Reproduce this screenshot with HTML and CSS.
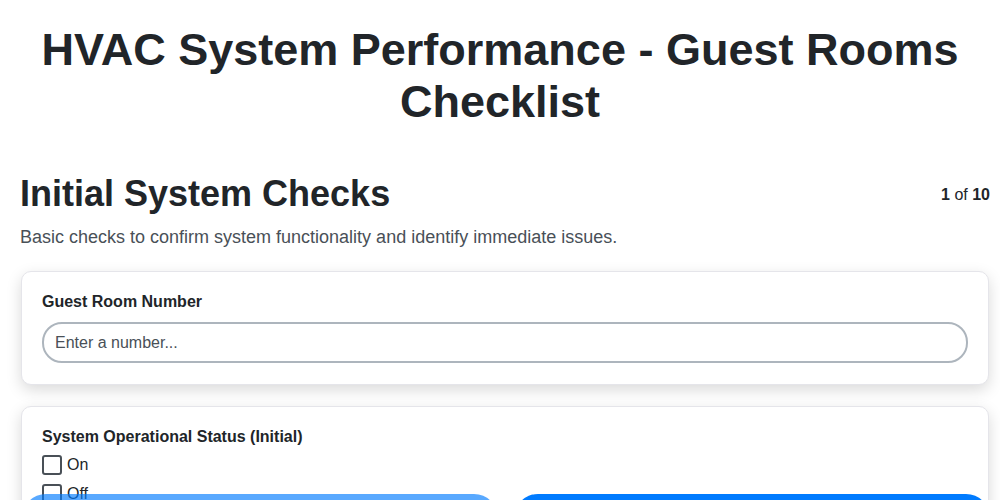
FILE: index.html
```html
<!DOCTYPE html>
<html lang="en">
<head>
  <meta charset="UTF-8" />
  <meta name="viewport" content="width=device-width, initial-scale=1.0"/>
  <title>HVAC System Performance - Guest Rooms Checklist</title>
  <link rel="stylesheet" href="styles.css">
</head>
<body>
  <div class="container">
    <h1>HVAC System Performance - Guest Rooms Checklist</h1>

    <div class="section-head">
      <h2>Initial System Checks</h2>
      <div class="step-count"><b>1</b> of <b>10</b></div>
    </div>
    <p class="section-desc">Basic checks to confirm system functionality and identify immediate issues.</p>

    <div class="card">
      <label class="field-label" for="room">Guest Room Number</label>
      <input type="text" id="room" class="text-input" placeholder="Enter a number..." />
    </div>

    <div class="card">
      <div class="field-label">System Operational Status (Initial)</div>
      <label class="check-row"><input type="checkbox" /> <span>On</span></label>
      <label class="check-row"><input type="checkbox" /> <span>Off</span></label>
      <label class="check-row"><input type="checkbox" /> <span>Error</span></label>
    </div>
  </div>

  <div class="nav-bar">
    <button class="nav-btn prev" disabled>Previous</button>
    <button class="nav-btn next">Next</button>
  </div>
</body>
</html>
```

FILE: styles.css
```css
* { box-sizing: border-box; }

body {
  margin: 0;
  font-family: "Liberation Sans", Arial, sans-serif;
  color: #212529;
  background: #fff;
}

.container {
  padding: 24px 10px 80px 20px;
}

h1 {
  margin: 0 0 44px;
  font-size: 45px;
  line-height: 52px;
  text-align: center;
  padding: 0 20px 0 10px;
}

.section-head {
  display: flex;
  justify-content: space-between;
  align-items: center;
}

h2 {
  margin: 0;
  font-size: 36px;
  line-height: 43px;
}

.step-count {
  font-size: 16px;
  padding-top: 2px;
}

.section-desc {
  margin: 9px 0 20px;
  font-size: 18px;
  line-height: 27px;
  color: #495057;
}

.card {
  margin: 0 1px 21px;
  padding: 18px 20px 21px;
  border: 1px solid #e5e5ea;
  border-radius: 10px;
  background: #fff;
  box-shadow: 0 5px 15px rgba(0,0,0,0.15);
}

.field-label {
  display: block;
  font-size: 16px;
  font-weight: bold;
  line-height: 24px;
  margin-bottom: 8px;
}

.text-input {
  display: block;
  width: 100%;
  height: 41px;
  padding: 0 11px;
  font-family: inherit;
  font-size: 16px;
  color: #212529;
  border: 2px solid #adb5bd;
  border-radius: 20px;
  outline: none;
}

.text-input::placeholder {
  color: #495057;
}

.check-row {
  display: flex;
  align-items: center;
  gap: 5px;
  height: 29px;
  font-size: 16px;
  margin-top: -7px;
  margin-bottom: 7px;
}

.check-row input {
  appearance: none;
  margin: 0;
  width: 20px;
  height: 20px;
  border: 2px solid #495057;
  border-radius: 3px;
  background: #fff;
}

.nav-bar {
  position: fixed;
  left: 22px;
  right: 10px;
  bottom: -42px;
  display: flex;
  gap: 16px;
}

.nav-btn {
  flex: 1;
  height: 48px;
  border: none;
  border-radius: 24px;
  background: #007bff;
  color: #fff;
  font-family: inherit;
  font-size: 16px;
  font-weight: bold;
}

.nav-btn.prev {
  opacity: 0.65;
}
```
